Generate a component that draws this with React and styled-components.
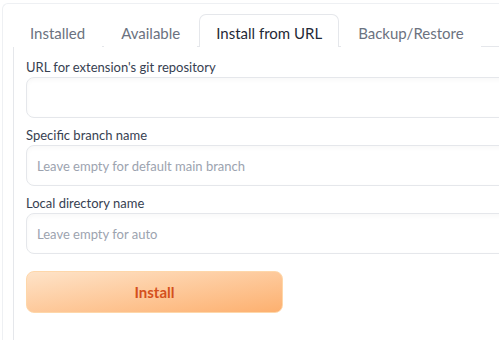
import React from "react";
import styled, { createGlobalStyle } from "styled-components";

const GlobalStyle = createGlobalStyle`
  html, body {
    margin: 0;
    padding: 0;
    background: #ffffff;
    overflow: hidden;
  }
  body {
    font-family: "Lato", "Liberation Sans", sans-serif;
  }
`;

const TABS = ["Installed", "Available", "Install from URL", "Backup/Restore"];

const FIELDS = [
  { label: "URL for extension's git repository", placeholder: "" },
  { label: "Specific branch name", placeholder: "Leave empty for default main branch" },
  { label: "Local directory name", placeholder: "Leave empty for auto" },
];

const App = () => {
  const active = 2;

  return (
    <>
      <GlobalStyle />
      <Block>
        <TabBar>
          {TABS.map((tab, i) => (
            <Tab key={tab} $active={i === active}>
              {tab}
            </Tab>
          ))}
        </TabBar>
        <Panel>
          {FIELDS.map((field) => (
            <Field key={field.label}>
              <Label>{field.label}</Label>
              <Input type="text" placeholder={field.placeholder} />
            </Field>
          ))}
          <PrimaryButton>Install</PrimaryButton>
        </Panel>
      </Block>
    </>
  );
};

const Block = styled.div`
  width: 580px;
  height: 400px;
  margin: 3px 0 0 2px;
  padding: 10px 0 0 10px;
  border: 1px solid #eef0f3;
  border-right: none;
  border-radius: 6px 0 0 0;
`;

const TabBar = styled.div`
  display: flex;
  gap: 2px;
  border-bottom: 1px solid #e5e7eb;
`;

const Tab = styled.button`
  height: 33px;
  padding: 3px 16px 0;
  margin-bottom: -1px;
  border: 1px solid ${(p) => (p.$active ? "#e5e7eb" : "transparent")};
  border-bottom: none;
  border-radius: 7px 7px 0 0;
  background: #ffffff;
  color: ${(p) => (p.$active ? "#1f2937" : "#6b7280")};
  font-family: inherit;
  font-size: 15px;
  line-height: 20px;
  cursor: pointer;
`;

const Panel = styled.div`
  display: flex;
  flex-direction: column;
  height: 290px;
  padding: 10px 12px;
  border: 1px solid #e5e7eb;
  border-top: none;
  border-radius: 0 0 0 7px;
`;

const Field = styled.label`
  display: flex;
  flex-direction: column;
  margin-bottom: 7px;
`;

const Label = styled.span`
  font-size: 13px;
  line-height: 20px;
  color: #374151;
`;

const Input = styled.input`
  height: 41px;
  box-sizing: border-box;
  padding: 0 10px;
  border: 1px solid #e5e7eb;
  border-radius: 8px;
  box-shadow: inset 0 2px 4px rgba(0, 0, 0, 0.03);
  background: #ffffff;
  font-family: inherit;
  font-size: 13px;
  color: #1f2937;
  outline: none;

  &::placeholder {
    color: #9ca3af;
  }
`;

const PrimaryButton = styled.button`
  width: 257px;
  height: 42px;
  margin-top: 10px;
  border: 1px solid #fed7aa;
  border-radius: 8px;
  background: linear-gradient(to bottom right, #fee3c8, #fdb06f);
  color: #d4501c;
  font-family: inherit;
  font-size: 15px;
  font-weight: 700;
  cursor: pointer;
`;

export default App;
